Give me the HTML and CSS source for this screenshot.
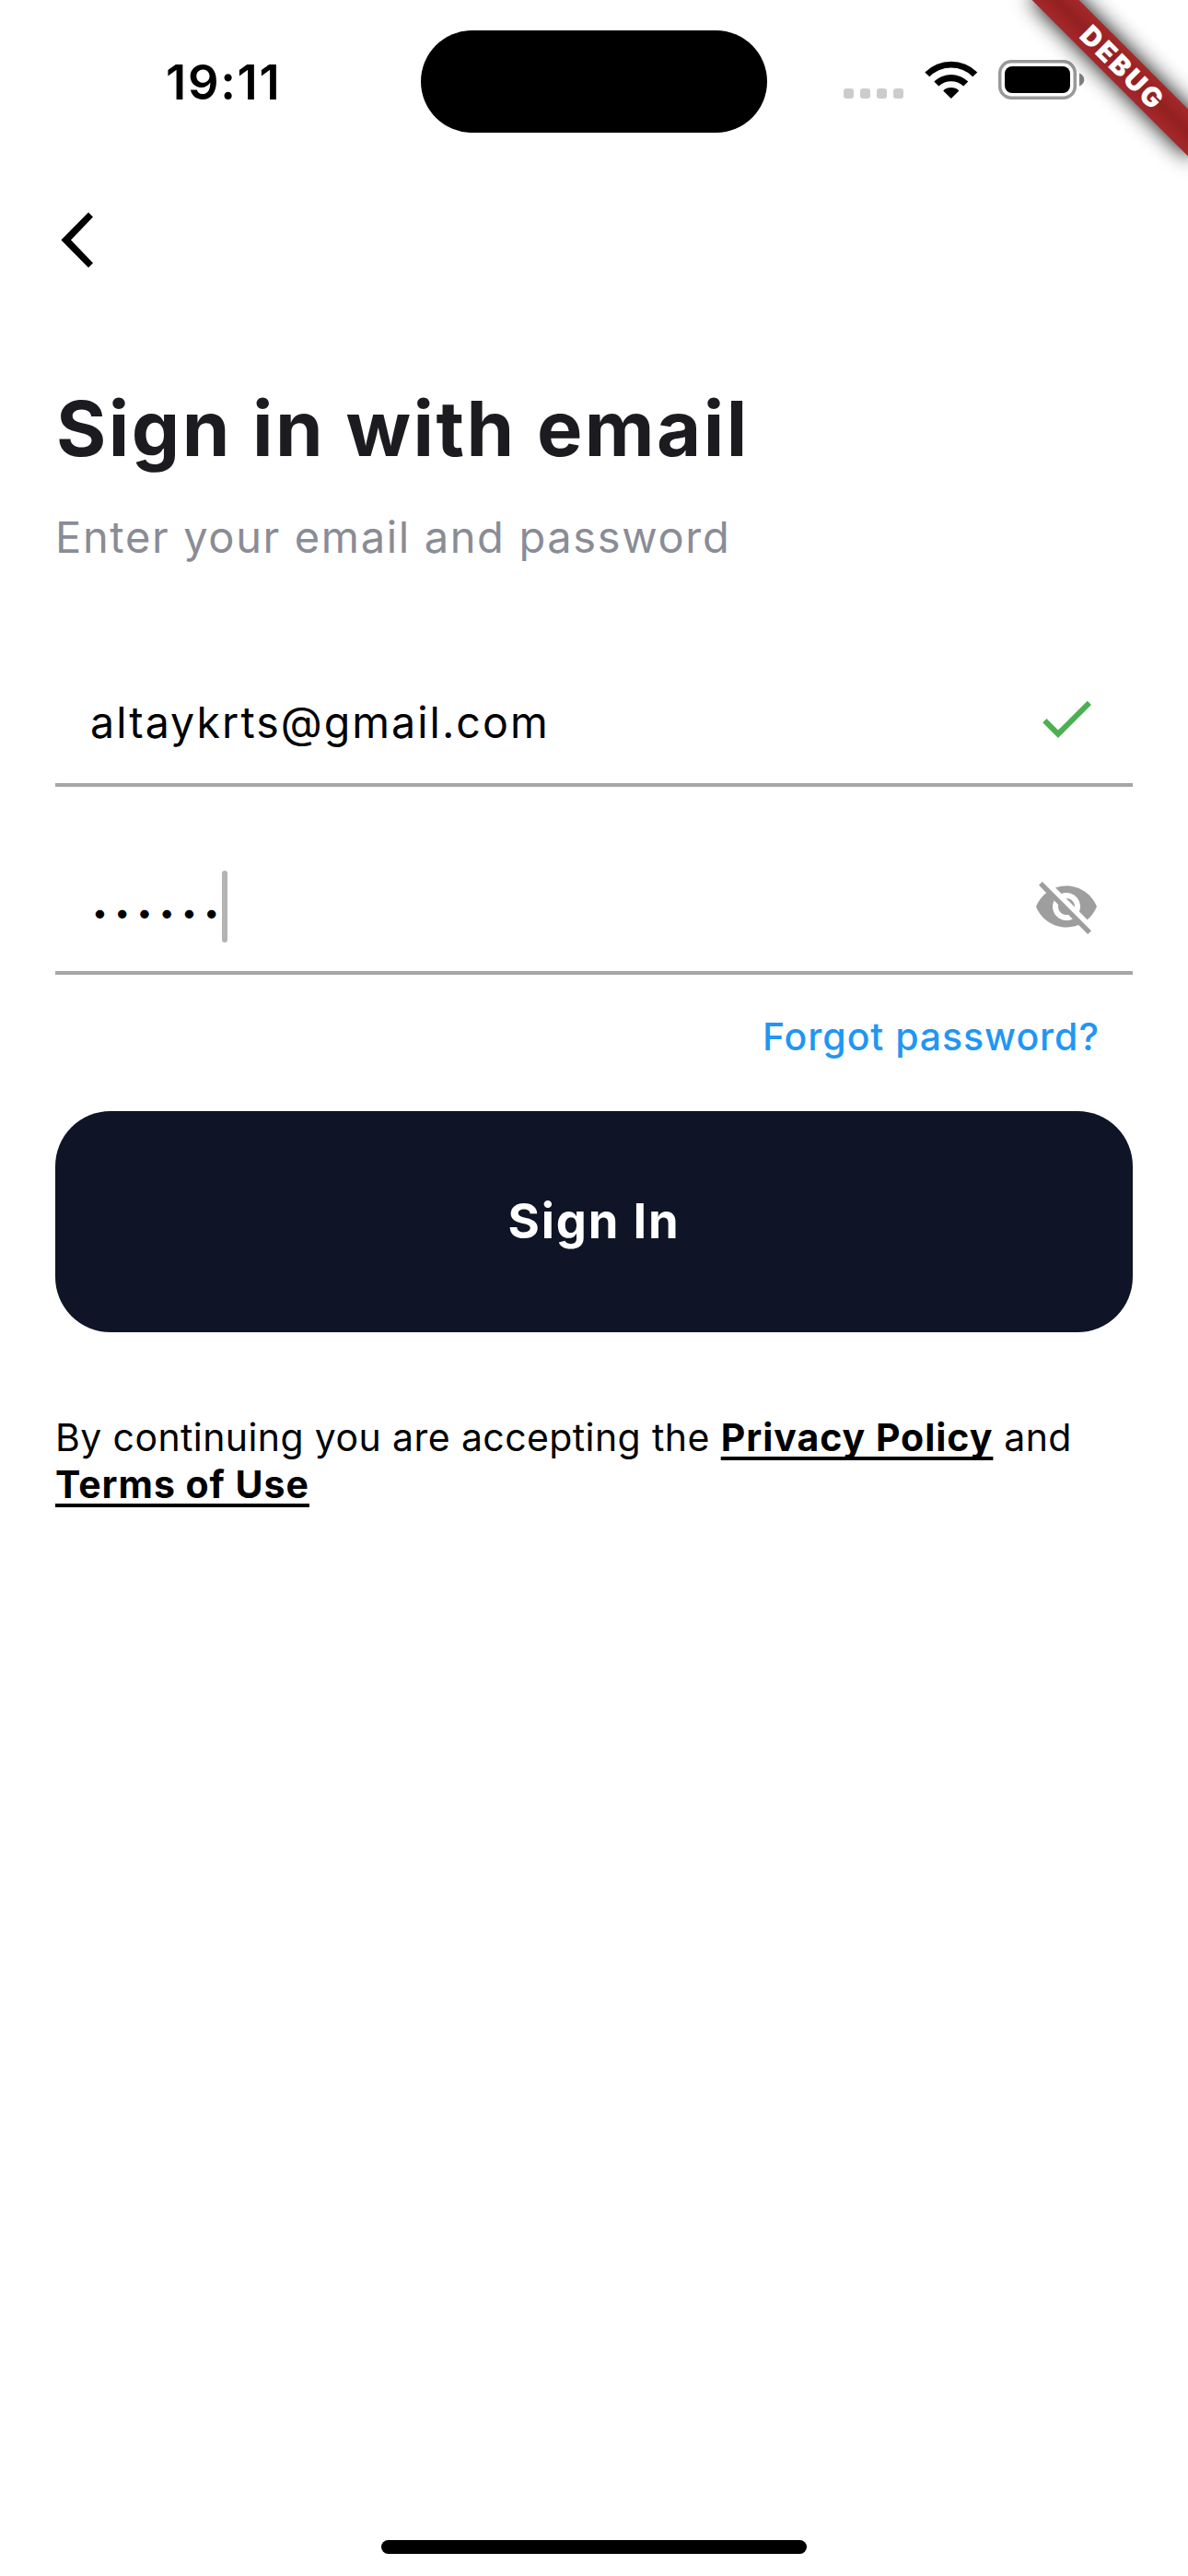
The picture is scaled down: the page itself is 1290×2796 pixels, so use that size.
FILE: index.html
```html
<!DOCTYPE html>
<html lang="en">
<head>
<meta charset="utf-8">
<title>Sign in</title>
<link rel="stylesheet" href="styles.css">
</head>
<body>
<div class="screen">
  <header class="status">
    <div class="time">19:11</div>
    <div class="island"></div>
    <div class="indicators">
      <div class="signal"><i></i><i></i><i></i><i></i></div>
      <svg class="wifi" width="58" height="43" viewBox="0 0 58 43">
        <path d="M0.3 13.4A40.5 40.5 0 0 1 57.3 13.4L52.3 18.2A33.6 33.6 0 0 0 5.3 18.2Z"/>
        <path d="M10.3 23.5A26.8 26.8 0 0 1 47.3 23.5L42.2 28.5A19.8 19.8 0 0 0 15.4 28.5Z"/>
        <path d="M20.2 33.4A12.8 12.8 0 0 1 37.4 33.4L28.8 42Z"/>
      </svg>
      <svg class="battery" width="96" height="44" viewBox="0 0 96 44">
        <rect x="1.75" y="1.75" width="81.5" height="39.5" rx="12.5" fill="none" stroke="#999" stroke-width="3.5"/>
        <rect x="7" y="7" width="71" height="29" rx="8" fill="#000"/>
        <path d="M88 14.5C95 17 95 26 88 28.5Z" fill="#808080"/>
      </svg>
    </div>
  </header>
  <nav class="nav">
    <svg width="36" height="61" viewBox="0 0 36 61"><path d="M30 0.5L35 5.5L11 30.5L35 55.5L30 60.5L0.4 30.5Z"/></svg>
  </nav>
  <main class="content">
    <h1 class="title">Sign in with email</h1>
    <p class="subtitle">Enter your email and password</p>
    <div class="field">
      <span class="value">altaykrts@gmail.com</span>
      <svg width="72" height="72" viewBox="0 0 24 24" fill="#4caf50"><path d="M9 16.17L4.83 12l-1.42 1.41L9 19 21 7l-1.41-1.41z"/></svg>
    </div>
    <div class="field field-password">
      <span class="dots">••••••</span><span class="caret"></span>
      <svg width="72" height="72" viewBox="0 0 24 24" fill="#9e9e9e"><path d="M12 7c2.76 0 5 2.24 5 5 0 .65-.13 1.26-.36 1.83l2.92 2.92c1.51-1.26 2.7-2.89 3.43-4.75-1.73-4.39-6-7.5-11-7.5-1.4 0-2.74.25-3.98.7l2.16 2.16C10.74 7.13 11.35 7 12 7zM2 4.27l2.28 2.28.46.46C3.08 8.3 1.78 10.02 1 12c1.73 4.39 6 7.5 11 7.5 1.55 0 3.03-.3 4.38-.84l.42.42L19.73 22 21 20.73 3.27 3 2 4.27zM7.53 9.8l1.55 1.55c-.05.21-.08.43-.08.65 0 1.66 1.34 3 3 3 .22 0 .44-.03.65-.08l1.55 1.55c-.67.33-1.41.53-2.2.53-2.76 0-5-2.24-5-5 0-.79.2-1.53.53-2.2zm4.31-.78l3.15 3.15.02-.16c0-1.66-1.34-3-3-3l-.17.01z"/></svg>
    </div>
    <a class="forgot">Forgot password?</a>
    <button class="submit">Sign In</button>
    <p class="legal">By continuing you are accepting the <a class="link">Privacy Policy</a> and<br><a class="link">Terms of Use</a></p>
  </main>
  <div class="home"></div>
  <div class="ribbon"><span class="ribbon-text">DEBUG</span></div>
</div>
</body>
</html>
```
FILE: styles.css
```css
* { box-sizing: border-box; }
body { margin: 0; background: #fff; font-family: Inter, "Liberation Sans", sans-serif; color: #000; }
.screen { position: relative; width: 1290px; height: 2796px; overflow: hidden; display: flex; flex-direction: column; }
.status { display: grid; grid-template-columns: 457px 376px 1fr; height: 177px; padding-top: 33px; }
.time { padding-left: 180px; font-size: 52.5px; font-weight: 600; line-height: 62px; padding-top: 25px; letter-spacing: 1.7px; }
.island { height: 111px; border-radius: 56px; background: #000; }
.indicators { display: flex; align-items: flex-start; padding: 32px 0 0 83px; }
.signal { display: flex; gap: 7px; padding-top: 31px; margin-right: 23px; }
.signal i { width: 11px; height: 11px; border-radius: 3px; background: #ccc; }
.battery { margin-left: 22px; }
.nav { height: 168px; padding: 53px 0 0 66px; }
.content { flex: 1; padding: 0 60px; display: flex; flex-direction: column; }
.title { margin: 70px 0 0 1px; font-size: 83px; line-height: 100px; font-weight: 700; color: #1c1b1f; white-space: nowrap; letter-spacing: 2.5px; }
.subtitle { margin: 38px 0 0; font-size: 47px; line-height: 60px; color: #8a8c96; white-space: nowrap; letter-spacing: 1.65px; }
.field { display: flex; align-items: center; height: 148px; padding: 4px 36px 0 38px; border-bottom: 4px solid #a6a6a6; font-size: 46.5px; margin-top: 93px; letter-spacing: 2.05px; }
.field svg { margin-left: auto; }
.field-password { margin-top: 56px; }
.value { padding-top: 7px; }
.dots { padding: 12px 0 0 2px; margin-right: -5px; font-size: 30px; letter-spacing: 7.4px; }
.caret { width: 6px; height: 78px; border-radius: 3px; background: #b4b4b4; }
.forgot { align-self: flex-end; margin: 42px 36px 0 0; font-size: 41px; line-height: 50px; font-weight: 500; color: #2196f3; letter-spacing: 0.95px; }
.submit { margin-top: 56px; height: 240px; border: 0; border-radius: 60px; background: #0f1526; color: #fff; font: 700 52.5px/64px Inter, sans-serif; letter-spacing: 1.8px; padding: 0 0 2px; }
.legal { margin: 89px 0 0; font-size: 41px; line-height: 51px; white-space: nowrap; letter-spacing: 0.4px; }
.link { font-weight: 700; letter-spacing: 0.97px; text-decoration: underline; text-decoration-thickness: 4px; text-underline-offset: 6px; text-decoration-skip-ink: none; }
.home { align-self: center; width: 462px; height: 15px; border-radius: 8px; background: #000; margin-bottom: 24px; }
.ribbon { position: absolute; top: 54px; left: 1098px; width: 240px; height: 36px; transform: rotate(45deg); display: flex; align-items: center; justify-content: center; }
.ribbon::before { content: ""; position: absolute; inset: 0; background: #000; filter: blur(12px); }
.ribbon::after { content: ""; position: absolute; inset: 0; background: linear-gradient(#a62829, #932021 50%, #a62829); }
.ribbon-text { position: relative; z-index: 1; color: #fff; font-size: 29.5px; font-weight: 900; line-height: 36px; letter-spacing: 2.6px; padding-left: 4px; }
```
